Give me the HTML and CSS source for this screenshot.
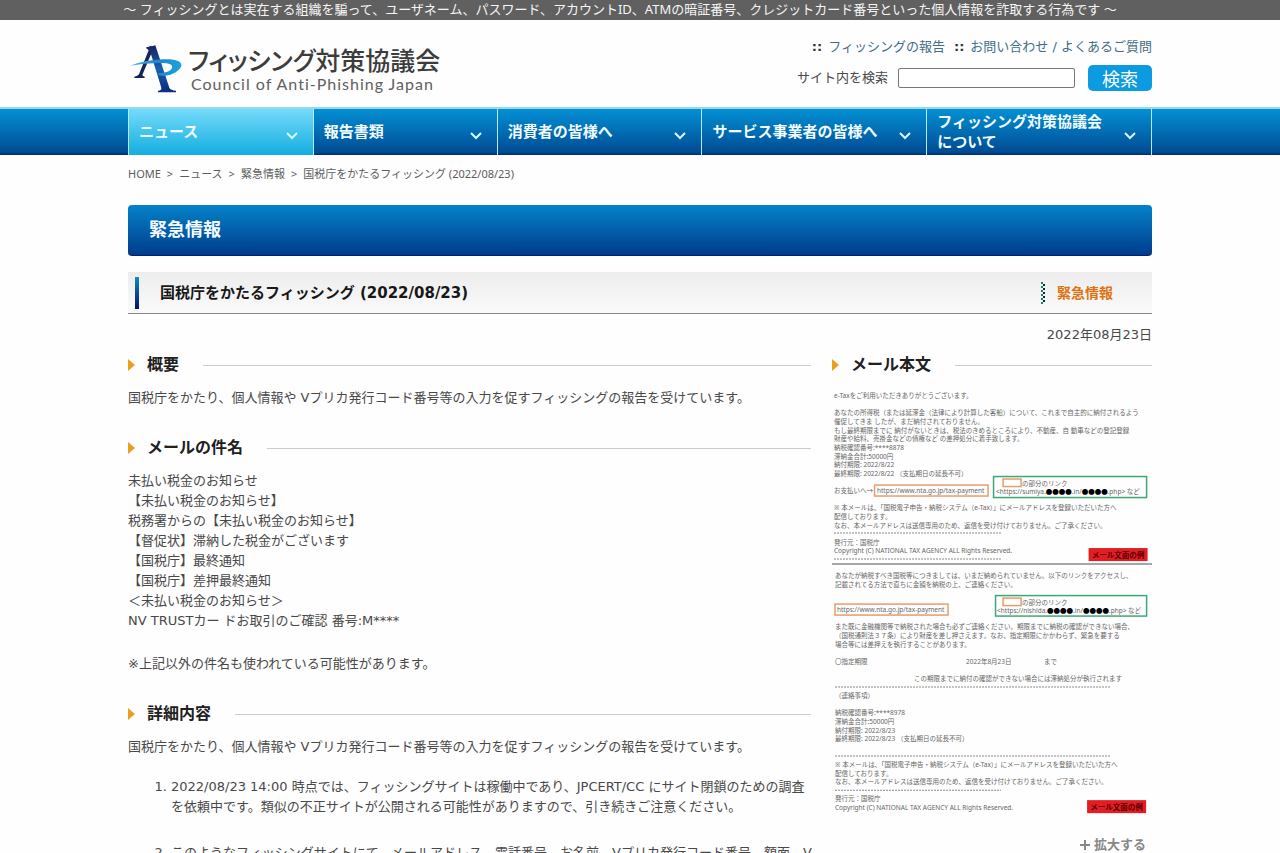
FILE: index.html
```html
<!DOCTYPE html>
<html lang="ja">
<head>
<meta charset="utf-8">
<title>フィッシング対策協議会 | 緊急情報</title>
<link rel="stylesheet" href="styles.css">
</head>
<body>
<p class="topbar">〜 フィッシングとは実在する組織を騙って、ユーザネーム、パスワード、アカウントID、ATMの暗証番号、クレジットカード番号といった個人情報を詐取する行為です 〜</p>

<header class="wrap header">
  <a class="logo" href="#">
    <svg class="logo-mark" viewBox="18 18 156 144" aria-hidden="true">
      <defs>
        <linearGradient id="leg" x1="0" y1="0" x2="0" y2="1"><stop offset="0" stop-color="#14245c"/><stop offset=".5" stop-color="#1c5fb0"/><stop offset="1" stop-color="#0a2a80"/></linearGradient>
        <linearGradient id="swoosh" x1="0" y1="0" x2="1" y2="0"><stop offset="0" stop-color="#58b4dc"/><stop offset=".5" stop-color="#1c86cc"/><stop offset="1" stop-color="#18a4dc"/></linearGradient>
      </defs>
      <path fill="#14245c" d="M66 26 L82 20 L86 34 L55 108 Q56 112 62 113 V117 H31 V113 Q41 112 45 106 L74 34 Z"/>
      <path fill="url(#leg)" d="M66 26 L94 19 L136 146 Q140 154 156 155 V160 H102 V155 Q114 154 112 146 L78 36 Z"/>
      <path fill="url(#swoosh)" d="M18 80 Q60 64 116 61 C164 58 180 72 169 87 C156 106 124 114 104 109 L101 101 C122 104 140 97 144 87 C148 75 132 71 104 72 Q60 73 18 80 Z"/>
    </svg>
    <span class="logo-text">
      <span class="logo-ja">フィッシング対策協議会</span>
      <span class="logo-en">Council of Anti-Phishing Japan</span>
    </span>
  </a>
  <div class="tools">
    <ul class="links">
      <li><a href="#">フィッシングの報告</a></li>
      <li><a href="#">お問い合わせ / よくあるご質問</a></li>
    </ul>
    <form class="search">
      <label for="q">サイト内を検索</label>
      <input id="q" type="text">
      <button type="submit">検索</button>
    </form>
  </div>
</header>

<nav class="nav">
  <ul class="wrap tabs">
    <li><a class="tab current" href="#">ニュース<svg viewBox="0 0 12 8"><path d="M1 1l5 5 5-5"/></svg></a></li>
    <li><a class="tab" href="#">報告書類<svg viewBox="0 0 12 8"><path d="M1 1l5 5 5-5"/></svg></a></li>
    <li><a class="tab" href="#">消費者の皆様へ<svg viewBox="0 0 12 8"><path d="M1 1l5 5 5-5"/></svg></a></li>
    <li><a class="tab" href="#">サービス事業者の皆様へ<svg viewBox="0 0 12 8"><path d="M1 1l5 5 5-5"/></svg></a></li>
    <li><a class="tab" href="#"><span>フィッシング対策協議会<br>について</span><svg viewBox="0 0 12 8"><path d="M1 1l5 5 5-5"/></svg></a></li>
  </ul>
</nav>

<main class="wrap">
  <ol class="crumbs">
    <li><a href="#">HOME</a></li>
    <li><a href="#">ニュース</a></li>
    <li><a href="#">緊急情報</a></li>
    <li>国税庁をかたるフィッシング (2022/08/23)</li>
  </ol>
  <h1 class="banner">緊急情報</h1>
  <div class="title">
    <h2>国税庁をかたるフィッシング (2022/08/23)</h2>
    <span class="category"><svg viewBox="0 0 4 22" aria-hidden="true"><path d="M1 0v22" stroke="#16806c"/><path d="M3 2v20" stroke="#123"/></svg>緊急情報</span>
  </div>
  <p class="date">2022年08月23日</p>

  <div class="columns">
    <div class="article">
      <section>
        <h3>概要</h3>
        <p>国税庁をかたり、個人情報や Vプリカ発行コード番号等の入力を促すフィッシングの報告を受けています。</p>
      </section>
      <section>
        <h3>メールの件名</h3>
        <p>未払い税金のお知らせ<br>【未払い税金のお知らせ】<br>税務署からの【未払い税金のお知らせ】<br>【督促状】滞納した税金がございます<br>【国税庁】最終通知<br>【国税庁】差押最終通知<br>＜未払い税金のお知らせ＞<br>NV TRUSTカー ドお取引のご確認 番号:M****</p>
        <p class="note">※上記以外の件名も使われている可能性があります。</p>
      </section>
      <section>
        <h3>詳細内容</h3>
        <p>国税庁をかたり、個人情報や Vプリカ発行コード番号等の入力を促すフィッシングの報告を受けています。</p>
        <ol class="details">
          <li>2022/08/23 14:00 時点では、フィッシングサイトは稼働中であり、JPCERT/CC にサイト閉鎖のための調査<br>を依頼中です。類似の不正サイトが公開される可能性がありますので、引き続きご注意ください。</li>
          <li>このようなフィッシングサイトにて、メールアドレス、電話番号、お名前、Vプリカ発行コード番号、額面、V</li>
        </ol>
      </section>
    </div>

    <aside class="side">
      <h3>メール本文</h3>
      <svg class="mail" viewBox="0 0 640 868" role="img" aria-label="フィッシングメール文面の例">
        <g class="mail-text">
          <text x="4" y="26">e-Taxをご利用いただきありがとうございます。</text>
          <text x="4" y="60">あなたの所得税（または延滞金（法律により計算した客船）について、これまで自主的に納付されるよう</text>
          <text x="4" y="77">催促してきま したが、まだ納付されておりません。</text>
          <text x="4" y="95">もし最終期限までに 納付がないときは、税法のきめるところにより、不動産、自 動車などの登記登録</text>
          <text x="4" y="112">財産や給料、売掛金などの債権など の差押処分に着手致します。</text>
          <text x="4" y="130">納税確認番号:****8878</text>
          <text x="4" y="147">滞納金合計:50000円</text>
          <text x="4" y="164">納付期限: 2022/8/22</text>
          <text x="4" y="181">最終期限: 2022/8/22 （支払期日の延長不可）</text>
          <text x="4" y="216">お支払いへ→</text>
          <text x="90" y="216">https://www.nta.go.jp/tax-payment</text>
          <text x="380" y="201">の部分のリンク</text>
          <text x="328" y="218">&lt;https://sumiya.<tspan class="mask">●●●●</tspan>.in/<tspan class="mask">●●●●</tspan>.php&gt; など</text>
          <text x="4" y="250">※ 本メールは、「国税電子申告・納税システム（e-Tax）」にメールアドレスを登録いただいた方へ</text>
          <text x="4" y="267">配信しております。</text>
          <text x="4" y="285">なお、本メールアドレスは送信専用のため、返信を受け付けておりません。ご了承ください。</text>
          <text x="4" y="319">発行元：国税庁</text>
          <text x="4" y="336">Copyright (C) NATIONAL TAX AGENCY ALL Rights Reserved.</text>
          <text x="6" y="385">あなたが納税すべき国税等につきましては、いまだ納められていません。以下のリンクをアクセスし、</text>
          <text x="6" y="403">記載されてる方法で直ちに金額を納税の上、ご連絡ください。</text>
          <text x="10" y="454">https://www.nta.go.jp/tax-payment</text>
          <text x="380" y="439">の部分のリンク</text>
          <text x="330" y="456">&lt;https://nishida.<tspan class="mask">●●●●</tspan>.in/<tspan class="mask">●●●●</tspan>.php&gt; など</text>
          <text x="6" y="488">また既に金融機関等で納税された場合も必ずご連絡ください。期限までに納税の確認ができない場合、</text>
          <text x="6" y="505">（国税通則法３７条）により財産を差し押さえます。なお、指定期限にかかわらず、緊急を要する</text>
          <text x="6" y="523">場合等には差押えを執行することがあります。</text>
          <text x="6" y="557">〇指定期限</text>
          <text x="268" y="557">2022年8月23日</text>
          <text x="424" y="557">まで</text>
          <text x="164" y="591">この期限までに納付の確認ができない場合には滞納処分が執行されます</text>
          <text x="6" y="625">（連絡事項）</text>
          <text x="6" y="660">納税確認番号:****8978</text>
          <text x="6" y="677">滞納金合計:50000円</text>
          <text x="6" y="695">納付期限: 2022/8/23</text>
          <text x="6" y="712">最終期限: 2022/8/23 （支払期日の延長不可）</text>
          <text x="6" y="763">※ 本メールは、「国税電子申告・納税システム（e-Tax）」にメールアドレスを登録いただいた方へ</text>
          <text x="6" y="781">配信しております。</text>
          <text x="6" y="798">なお、本メールアドレスは送信専用のため、返信を受け付けておりません。ご了承ください。</text>
          <text x="6" y="832">発行元：国税庁</text>
          <text x="6" y="849">Copyright (C) NATIONAL TAX AGENCY ALL Rights Reserved.</text>
        </g>
        <path class="dashes" d="M4 296H338M4 348H338M6 604H556M6 742H556M6 810H338"/>
        <path class="divider" d="M0 358H640"/>
        <g class="orange">
          <rect x="85" y="200" width="227" height="22"/><rect x="342" y="188" width="36" height="15"/>
          <rect x="6" y="438" width="226" height="22"/><rect x="342" y="426" width="36" height="15"/>
        </g>
        <g class="green"><rect x="323" y="183" width="306" height="42"/><rect x="327" y="421" width="302" height="41"/></g>
        <g class="tag">
          <rect x="513" y="326" width="118" height="26"/><text x="572" y="345">メール文面の例</text>
          <rect x="510" y="830" width="118" height="26"/><text x="569" y="849">メール文面の例</text>
        </g>
      </svg>
      <a class="enlarge" href="#"><svg viewBox="0 0 10 10" aria-hidden="true"><path d="M5 0v10M0 5h10"/></svg>拡大する</a>
    </aside>
  </div>
</main>
</body>
</html>
```
FILE: styles.css
```css
* { box-sizing: border-box; }

body {
  margin: 0;
  background: #fefefe;
  color: #484848;
  font: 13px/20px "DejaVu Sans", "Noto Sans CJK JP", sans-serif;
  overflow-x: hidden;
}

h1, h2, h3, p, ul, ol { margin: 0; padding: 0; }
ul, .crumbs { list-style: none; }
a { color: inherit; text-decoration: none; }
.wrap { width: 80%; margin: 0 auto; }

.topbar {
  height: 20px;
  padding-right: 40px;
  background: #606060;
  color: #f6f6f6;
  font-family: "Noto Sans", "Noto Sans CJK JP", sans-serif;
  text-align: center;
  white-space: nowrap;
  line-height: 18px;
}

/* Header */
.header {
  display: flex;
  justify-content: space-between;
  height: 87px;
}
.logo { display: flex; padding: 25px 0 0 2px; gap: 6px; }
.logo-mark { width: 52px; height: 48px; }
.logo-text { display: flex; flex-direction: column; }
.logo-ja {
  font-family: "Noto Sans CJK JP", sans-serif;
  font-size: 25px;
  line-height: 28px;
  font-weight: 500;
  font-feature-settings: "palt";
  color: #3c3c3c;
}
.logo-en {
  padding-left: 3px;
  font: 16px/22px Lato, sans-serif;
  letter-spacing: 1px;
  color: #606060;
}
.tools { padding-top: 17px; }
.links { display: flex; justify-content: flex-end; gap: 9px; color: #3f6f86; }
.links li::before { content: "::"; margin-right: 6px; color: #333; font-weight: 700; }
.search { display: flex; align-items: center; justify-content: flex-end; margin-top: 8px; }
.search label { margin-right: 10px; }
.search input {
  width: 177px;
  height: 20px;
  margin-right: 13px;
  border: 1px solid #777;
  border-radius: 2px;
  background: #fff;
}
.search button {
  width: 64px;
  height: 26px;
  padding: 0;
  border: 0;
  border-radius: 5px;
  background: #0c9be0;
  color: #fff;
  font: 18px/26px "Noto Sans CJK JP", sans-serif;
}

/* Navigation */
.nav {
  border-top: 2px solid #8fdcf0;
  background: linear-gradient(#0490d4, #004c94 94%, #002a70);
}
.tabs {
  display: grid;
  grid-template-columns: 185fr 184fr 205fr 225fr 225fr;
  border-left: 1px solid #b4eaf6;
}
.tab {
  display: flex;
  align-items: center;
  justify-content: space-between;
  height: 46px;
  padding: 0 15px 0 10px;
  border-right: 1px solid #b4eaf6;
  color: #f0fcff;
  font-size: 15px;
  font-weight: 700;
}
.tab.current { background: linear-gradient(#74dafa, #14aee0); }
.tab svg {
  width: 12px;
  height: 8px;
  margin-top: 7px;
  fill: none;
  stroke: #d8f8fc;
  stroke-width: 2;
}

/* Page heading */
.crumbs {
  display: flex;
  padding-top: 9px;
  color: #5c5c5c;
  font-family: "Noto Sans", "Noto Sans CJK JP", sans-serif;
  font-size: 11px;
}
.crumbs li + li::before { content: ">"; margin: 0 6px; }
.banner {
  height: 51px;
  margin-top: 21px;
  padding-left: 21px;
  border-bottom: 1px solid #00206c;
  border-radius: 4px;
  background: linear-gradient(#0482c8, #003c8c);
  color: #f4fcff;
  font-size: 18px;
  line-height: 50px;
}
.title {
  display: flex;
  align-items: center;
  height: 42px;
  margin-top: 16px;
  padding: 0 39px 0 7px;
  border-top: 1px solid #ececec;
  border-bottom: 1px solid #888;
  background: linear-gradient(#ededed, #fafafa);
}
.title::before {
  content: "";
  width: 4px;
  height: 32px;
  background: linear-gradient(#0c8cbc, #00106c);
}
.title h2 {
  flex: 1;
  padding-left: 21px;
  color: #181818;
  font-size: 15px;
}
.category {
  display: flex;
  align-items: center;
  gap: 12px;
  color: #dc7414;
  font-size: 14px;
  font-weight: 700;
}
.category svg { width: 4px; height: 22px; stroke-width: 2; stroke-dasharray: 2 2; }
.date { margin-top: 11px; text-align: right; }

/* Article */
.columns {
  display: grid;
  grid-template-columns: minmax(0, 32fr) minmax(0, 15fr);
  gap: 21px;
  margin-top: 10px;
}
.columns h3 {
  display: flex;
  align-items: center;
  color: #202020;
  font-size: 16px;
}
.columns h3::before {
  content: "";
  margin-right: 12px;
  border: solid transparent;
  border-width: 6px 0 6px 7px;
  border-left-color: #e8a024;
}
.columns h3::after {
  content: "";
  flex: 1;
  height: 1px;
  margin-left: 24px;
  background: #ccc;
}
.article section + section { margin-top: 30px; }
.article p { margin-top: 13px; }
.article .note { margin-top: 23px; }
.details { margin-top: 20px; padding-left: 43px; }
.details li { white-space: nowrap; }
.details li + li { margin-top: 26px; }

/* Mail sample */
.mail { display: block; width: 100%; margin-top: 10px; }
.mail-text {
  fill: #666;
  font-family: "Noto Sans", "Noto Sans CJK JP", sans-serif;
  font-size: 13px;
}
.mail-text .mask { fill: #000; }
.dashes { stroke: #888; stroke-width: 2; stroke-dasharray: 4 2; }
.divider { stroke: #888; stroke-width: 3; }
.orange { fill: none; stroke: #e89c6c; stroke-width: 3; }
.green { fill: none; stroke: #3ca878; stroke-width: 3; }
.tag rect { fill: #e41c24; }
.tag text { fill: #500; font-size: 15px; font-weight: 700; text-anchor: middle; }
.enlarge {
  display: flex;
  align-items: center;
  justify-content: flex-end;
  gap: 4px;
  margin-top: 16px;
  padding-right: 6px;
  color: #888;
  font-weight: 700;
}
.enlarge svg { width: 10px; height: 10px; stroke: #888; stroke-width: 2; }
```
